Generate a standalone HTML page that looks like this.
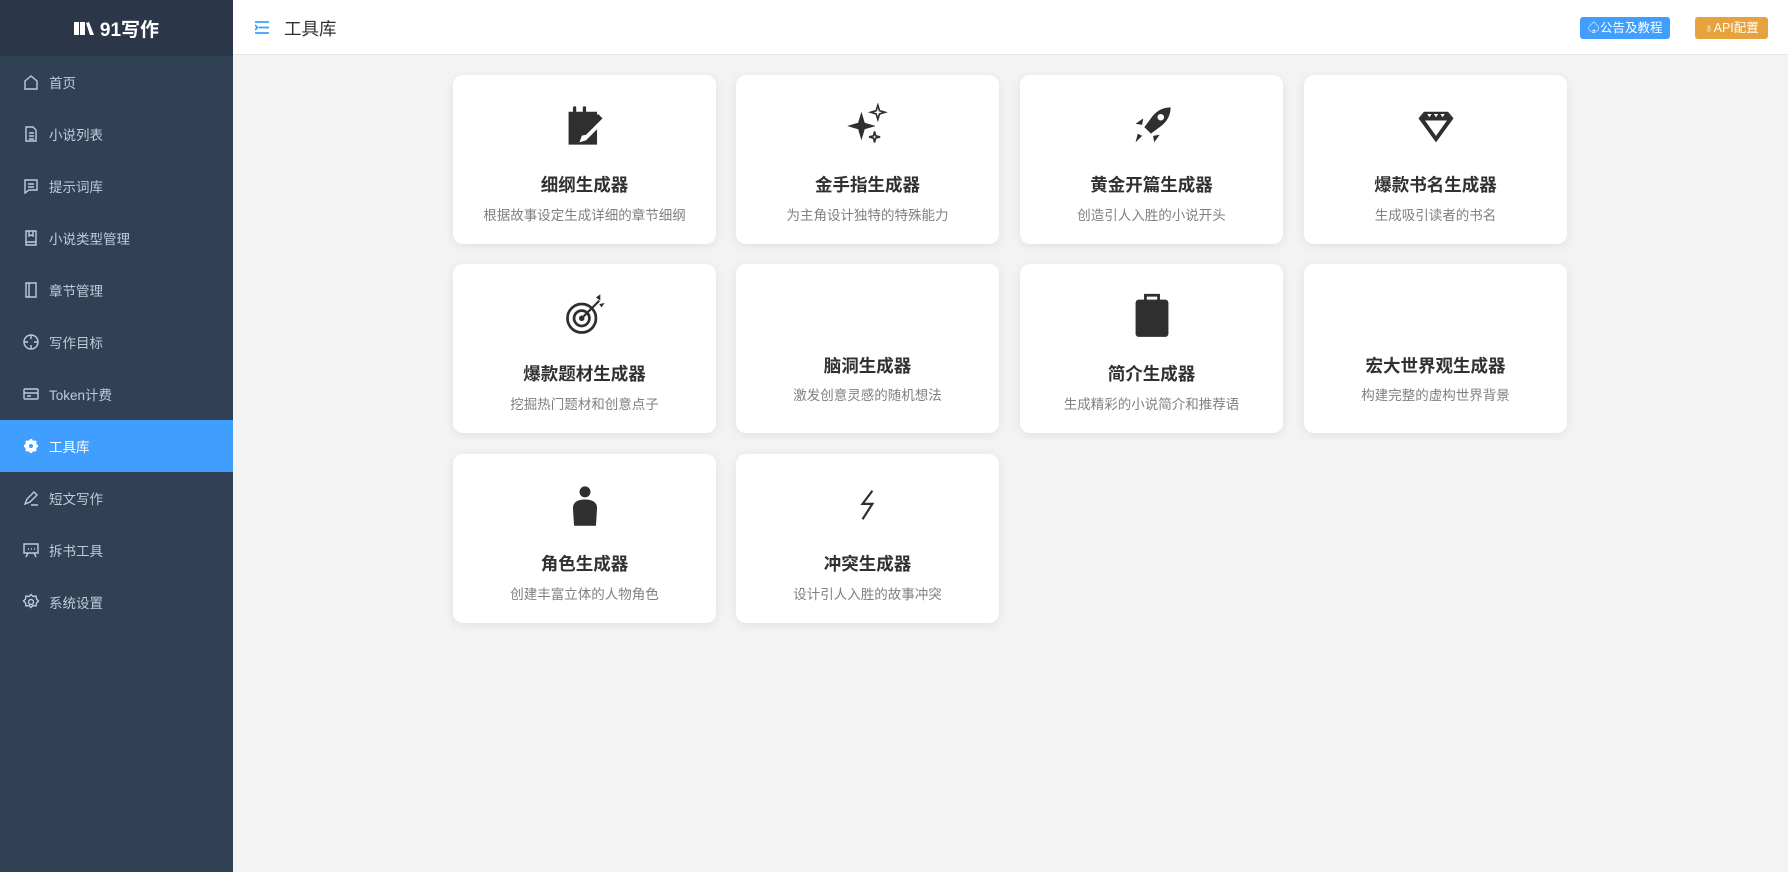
<!DOCTYPE html>
<html><head><meta charset="utf-8"><style>
*{margin:0;padding:0;box-sizing:border-box}
body{width:1788px;height:872px;overflow:hidden;font-family:"Liberation Sans","Noto Sans CJK SC",sans-serif;background:#f3f3f3;position:relative}
.side{position:absolute;left:0;top:0;width:233px;height:872px;background:#304156}
.logo{height:56px;background:#2b3649;color:#fff;font-weight:bold;font-size:19px;display:flex;align-items:center;justify-content:center;gap:6px}
.mi{height:52px;display:flex;align-items:center;padding-left:22px;color:#bfcbd9;font-size:13.5px}
.mi svg{width:18px;height:18px;margin-right:9px;stroke:#bfcbd9;fill:none;stroke-width:1.4}
.mi.act{background:#409eff;color:#fff}
.mi.act svg{stroke:#fff}
.head{position:absolute;left:233px;top:0;right:0;height:55px;background:#fff;border-bottom:1px solid #e6e6e6}
.ttl{position:absolute;left:51px;top:16px;font-size:17.5px;color:#303133}
.btn{position:absolute;top:17px;height:22px;border-radius:3px;color:#fff;font-size:12.5px;line-height:22px;text-align:center}
.card{position:absolute;width:263px;height:169px;background:#fff;border-radius:10px;box-shadow:0 2px 10px rgba(0,0,0,.08);text-align:center}
.card svg{position:absolute;left:109px;top:28px;width:46px;height:46px;fill:#2f2f2f}
.card h3{position:absolute;left:0;right:0;top:97px;font-size:17.5px;color:#303133;font-weight:bold}
.card p{position:absolute;left:0;right:0;top:129px;font-size:13.5px;color:#808080}
.card.ni h3{top:89px}.card.ni p{top:120px}
</style></head><body>
<div class="side">
<div class="logo"><svg width="20" height="16" viewBox="0 0 20 16"><rect x="0" y="2" width="5" height="13" fill="#fff"/><rect x="6" y="2" width="5" height="13" fill="#fff"/><path d="M12 3l3-1 5 13h-4z" fill="#fff"/></svg>91写作</div>
<div class="mi"><svg viewBox="0 0 18 18"><path d="M3 8l6-5 6 5v8H3z"/></svg>首页</div>
<div class="mi"><svg viewBox="0 0 18 18"><path d="M4 2h7l3 3v11H4zM7 8h5M7 11h5M7 14h5"/></svg>小说列表</div>
<div class="mi"><svg viewBox="0 0 18 18"><path d="M3 3h12v10H7l-4 3zM6 7h6M6 10h6"/></svg>提示词库</div>
<div class="mi"><svg viewBox="0 0 18 18"><path d="M4 2h10v14H4zM4 13h10M7 2v5l2-1 2 1V2"/></svg>小说类型管理</div>
<div class="mi"><svg viewBox="0 0 18 18"><path d="M4 2h10v14H4zM7 2v14"/></svg>章节管理</div>
<div class="mi"><svg viewBox="0 0 18 18"><circle cx="9" cy="9" r="7"/><path d="M9 2v4M9 12v4M2 9h4M12 9h4"/></svg>写作目标</div>
<div class="mi"><svg viewBox="0 0 18 18"><rect x="2" y="4" width="14" height="10" rx="1"/><path d="M2 8h14M5 11h4"/></svg>Token计费</div>
<div class="mi act"><svg viewBox="0 0 18 18"><circle cx="9" cy="9" r="4" stroke-width="4"/><path d="M9 2v3M9 13v3M2 9h3M13 9h3M4 4l2 2M12 12l2 2M4 14l2-2M12 6l2-2" stroke-width="2.5"/></svg>工具库</div>
<div class="mi"><svg viewBox="0 0 18 18"><path d="M3 15l2-5 7-7 3 3-7 7zM9 16h7"/></svg>短文写作</div>
<div class="mi"><svg viewBox="0 0 18 18"><path d="M2 3h14v9H2zM6 12l-2 4M12 12l2 4M6 8h1M9 8h1M12 8h1"/></svg>拆书工具</div>
<div class="mi"><svg viewBox="0 0 18 18"><circle cx="9" cy="9" r="2.5"/><path d="M9 1.5l2 2 3-.5.5 3 2 2-2 2-.5 3-3-.5-2 2-2-2-3 .5-.5-3-2-2 2-2 .5-3 3 .5z"/></svg>系统设置</div>
</div>
<div class="head">
<svg style="position:absolute;left:22px;top:21px" width="14" height="13" viewBox="0 0 14 13"><path d="M0 1h14M4 6.5h10M0 12h14M0 4l2.5 2.5L0 9" stroke="#409eff" stroke-width="1.8" fill="none"/></svg>
<div class="ttl">工具库</div>
<div class="btn" style="left:1347px;width:90px;background:#409eff">♤公告及教程</div>
<div class="btn" style="left:1462px;width:73px;background:#e6a23c">♁API配置</div>
</div>

<div class="card" style="left:453px;top:75px"><svg viewBox="0 0 42 42"><path d="M6 8h26v8L18 30l-2 6 6-2 10-10v14H6z"/><rect x="10" y="3" width="3" height="9" rx="1.5"/><rect x="19" y="3" width="3" height="9" rx="1.5"/><path d="M33 10l4 4-15 15-5 1 1-5z"/></svg><h3>细纲生成器</h3><p>根据故事设定生成详细的章节细纲</p></div>
<div class="card" style="left:736px;top:75px"><svg viewBox="0 0 42 42"><path d="M15 8l3 10 10 3-10 3-3 10-3-10-10-3 10-3z"/><path d="M30 2l1.5 5 5 1.5-5 1.5-1.5 5-1.5-5-5-1.5 5-1.5z" fill="none" stroke="#2f2f2f" stroke-width="1.5"/><path d="M27 26l1 4 4 1-4 1-1 4-1-4-4-1 4-1z" fill="none" stroke="#2f2f2f" stroke-width="1.5"/></svg><h3>金手指生成器</h3><p>为主角设计独特的特殊能力</p></div>
<div class="card" style="left:1020px;top:75px"><svg viewBox="0 0 42 42"><path d="M38 4c-8 0-14 4-18 10l-6 8 6 6 8-6c6-4 10-10 10-18z"/><circle cx="29" cy="13" r="3" fill="#fff"/><path d="M13 14l-7 5 6 1zM28 29l-5 7-1-6zM12 30l-6 6 2-8z"/></svg><h3>黄金开篇生成器</h3><p>创造引人入胜的小说开头</p></div>
<div class="card" style="left:1304px;top:75px"><svg viewBox="0 0 42 42"><path d="M5 14l5-6h22l5 6L21 36z"/><path d="M11 16h20L21 30z" fill="#fff"/><path d="M13 10h4l-2 3zM19 10h4l-2 3zM25 10h4l-2 3z" fill="#fff"/></svg><h3>爆款书名生成器</h3><p>生成吸引读者的书名</p></div>

<div class="card" style="left:453px;top:264px"><svg viewBox="0 0 42 42"><circle cx="18" cy="24" r="13" fill="none" stroke="#2f2f2f" stroke-width="2.5"/><circle cx="18" cy="24" r="7" fill="none" stroke="#2f2f2f" stroke-width="2.5"/><circle cx="18" cy="24" r="2.5"/><path d="M18 24L34 8" stroke="#2f2f2f" stroke-width="2"/><path d="M31 5l4-3v6zM34 11l5-1-3 4z"/></svg><h3>爆款题材生成器</h3><p>挖掘热门题材和创意点子</p></div>
<div class="card ni" style="left:736px;top:264px"><h3>脑洞生成器</h3><p>激发创意灵感的随机想法</p></div>
<div class="card" style="left:1020px;top:264px"><svg viewBox="0 0 42 42"><rect x="6" y="7" width="30" height="34" rx="3"/><path d="M15 9V3h12v6" fill="none" stroke="#2f2f2f" stroke-width="2.5"/></svg><h3>简介生成器</h3><p>生成精彩的小说简介和推荐语</p></div>
<div class="card ni" style="left:1304px;top:264px"><h3>宏大世界观生成器</h3><p>构建完整的虚构世界背景</p></div>

<div class="card" style="left:453px;top:454px"><svg viewBox="0 0 42 42"><circle cx="21" cy="9" r="5"/><path d="M11 40l-1-16c0-6 5-8 11-8s11 2 11 8l-1 16z"/></svg><h3>角色生成器</h3><p>创建丰富立体的人物角色</p></div>
<div class="card" style="left:736px;top:454px"><svg viewBox="0 0 42 42"><path d="M25 8l-9 12h9l-9 14" fill="none" stroke="#2f2f2f" stroke-width="2"/></svg><h3>冲突生成器</h3><p>设计引人入胜的故事冲突</p></div>
</body></html>
